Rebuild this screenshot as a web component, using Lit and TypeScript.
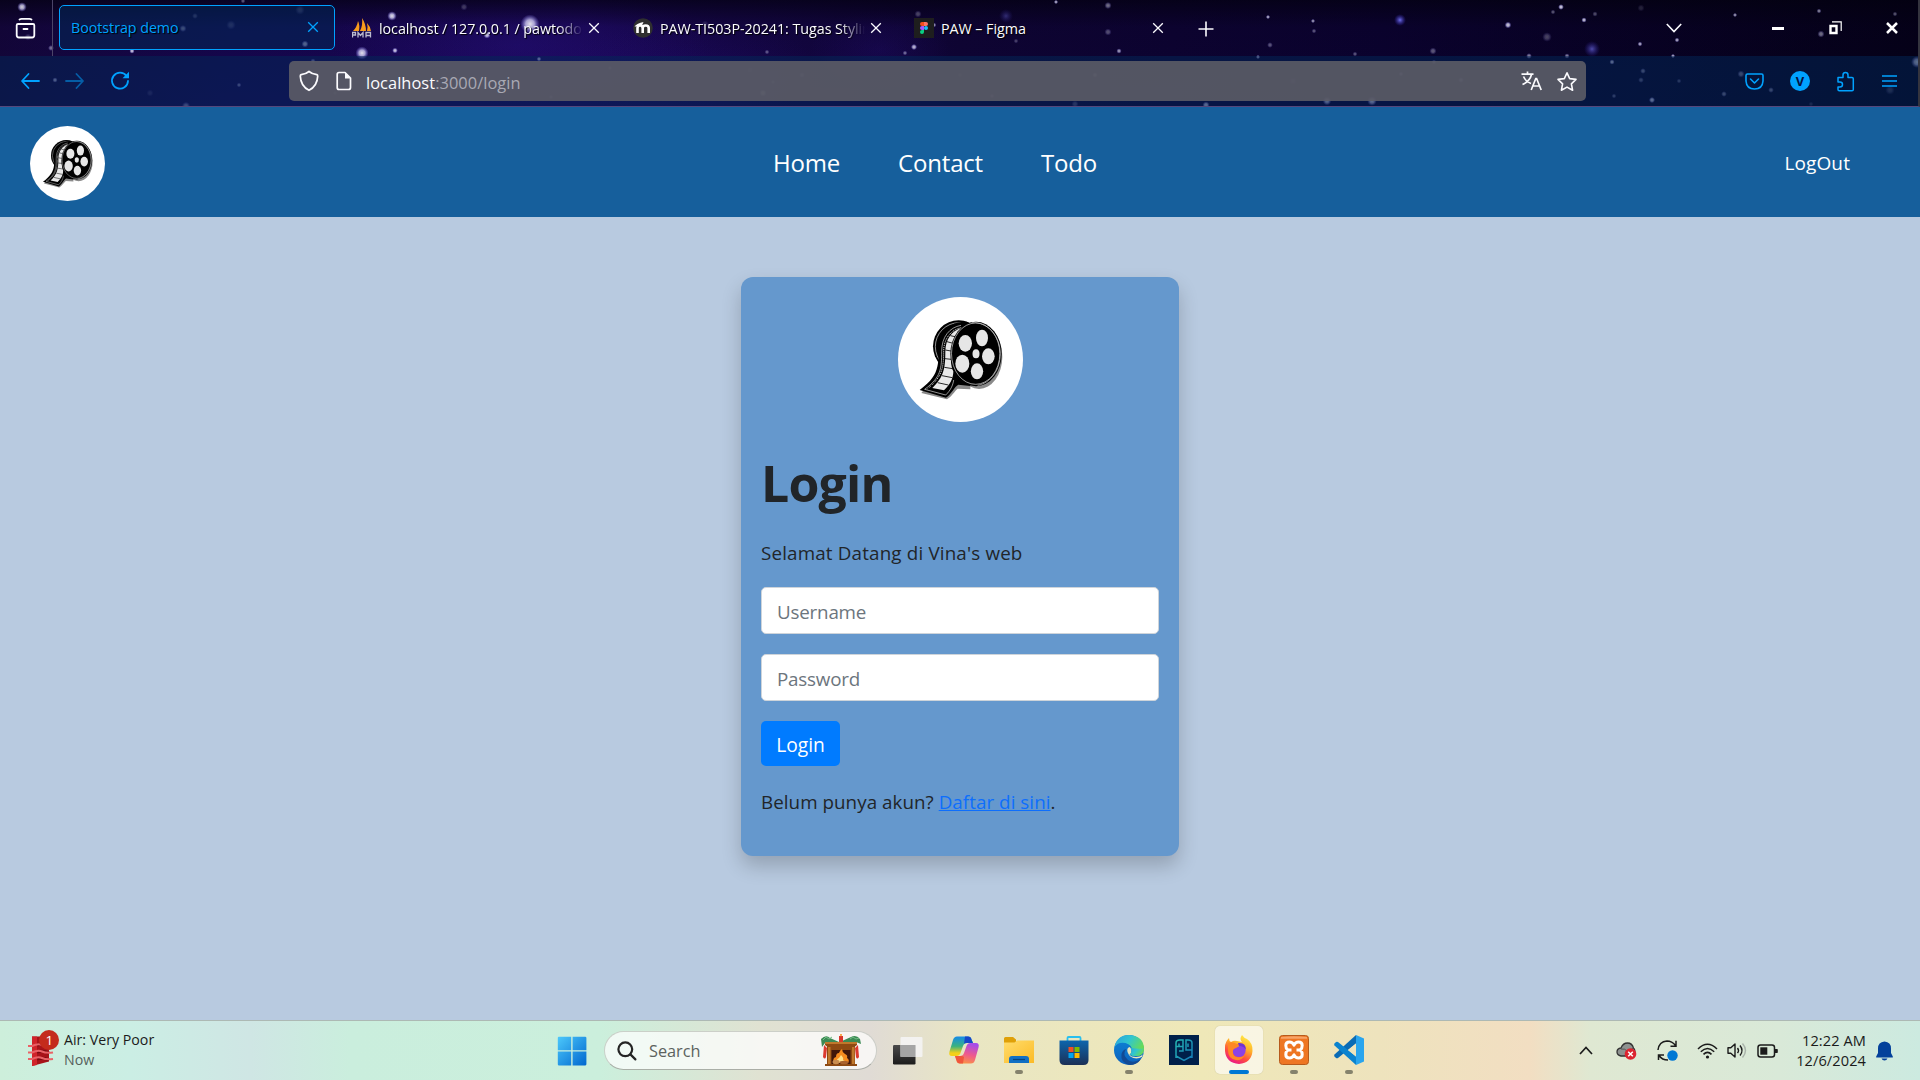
import { LitElement, html, svg, css } from "lit";
import { customElement } from "lit/decorators.js";

/* x, y, radius, opacity of each star in the browser theme */
const STARS: number[][] = [
  [22, 7, 4, 0.9], [51, 48, 2.5, 0.5], [132, 51, 2.2, 0.9], [183, 28.5, 3, 0.55], [195, 16, 2.5, 0.3],
  [231, 25, 4, 0.25], [305, 44, 3, 0.8], [300, 10, 4, 0.25], [362, 53, 5.5, 0.95], [395, 50.5, 2.4, 0.9], [392, 16, 4, 0.95],
  [530, 24, 8, 0.95], [487, 35, 3, 0.9], [313, 61, 2.2, 0.5], [55, 80, 2.2, 0.7], [239, 85, 2, 0.5],
  [539, 59, 2, 0.8], [186, 106, 3.5, 0.5], [335, 93, 2, 0.3], [610, 68, 2, 0.3], [551, 97, 2, 0.35],
  [28, 37, 3, 0.25], [243, 1, 2, 0.4], [150, 93, 3, 0.15], [464, 7, 3, 0.25],
  [914, 47, 2.6, 0.85], [905, 53, 2, 0.5], [934, 25, 2, 0.7], [1056, 2, 1.8, 0.8], [1108, 5.5, 3, 0.5],
  [1108, 32, 3, 0.35], [1119, 51, 2.2, 0.7], [1258, 57, 1.8, 0.7], [1016, 41, 2, 0.3], [918, 14, 3, 0.3],
  [763, 93, 3.2, 0.6], [802, 75, 2.4, 0.35], [773, 82, 2, 0.3], [1095, 75, 2.4, 0.5], [992, 96, 2, 0.4],
  [1206, 105, 3, 0.8], [1075, 104, 3, 0.3], [960, 75, 2, 0.2], [750, 70, 3, 0.15], [767, 52, 2, 0.4],
  [1268, 17, 1.8, 0.8], [1313, 21, 1.8, 0.7], [1314, 31, 2, 0.4], [1270, 45, 2.4, 0.4], [1355, 54, 2, 0.4],
  [1508, 25, 2.8, 0.9], [1561, 7, 2.4, 0.95], [1553, 12, 2, 0.4], [1584, 20, 2.2, 0.9], [1595, 14, 2.2, 0.35],
  [1547, 37, 4, 0.3], [1640, 44, 2, 0.8], [1677, 40, 2, 0.8], [1673, 56, 1.8, 0.8], [1735, 15, 1.8, 0.7],
  [1819, 11, 2, 0.6], [1821, 34, 3, 0.5], [1895, 14, 2, 0.4], [1641, 8, 3, 0.15], [1529, 56, 2.4, 0.6], [1567, 56, 2.2, 0.6],
  [1612, 62, 2.2, 0.8], [1643, 71, 2.4, 0.5], [1641, 80, 2.4, 0.4], [1652, 100, 2.6, 0.85], [1724, 94, 2.4, 0.5],
  [1741, 74, 3, 0.5], [1771, 90, 2.4, 0.5], [1679, 81, 2, 0.35], [1614, 96, 2, 0.4], [1917, 62, 5, 0.8],
  [1327, 101, 3.6, 0.75], [1372, 101, 4, 0.8], [1401, 74, 2, 0.5], [1461, 80, 2.4, 0.5], [1293, 81, 3, 0.2],
  [1433, 51, 3, 0.4], [1434, 62, 2, 0.5], [1890, 90, 4, 0.25], [1811, 104, 2, 0.2], [705, 24, 3, 0.15],
];

const stars = svg`<svg class="sky" width="1920" height="107" viewBox="0 0 1920 107" aria-hidden="true">
  <defs>
    <linearGradient id="sky" x1="0" y1="0" x2="1" y2="0">
      <stop offset="0" stop-color="#14063c"/><stop offset=".12" stop-color="#160650"/><stop offset=".3" stop-color="#1a0757"/>
      <stop offset=".38" stop-color="#150648"/><stop offset=".5" stop-color="#0f0436"/><stop offset=".72" stop-color="#0b0230"/>
      <stop offset="1" stop-color="#050119"/>
    </linearGradient>
    <linearGradient id="dim" x1="0" y1="0" x2="0" y2="1">
      <stop offset="0" stop-color="#03010f" stop-opacity=".7"/><stop offset=".25" stop-color="#03010f" stop-opacity=".12"/><stop offset="1" stop-color="#03010f" stop-opacity="0"/>
    </linearGradient>
    <radialGradient id="glow"><stop offset="0" stop-color="#2c1490" stop-opacity=".4"/><stop offset="1" stop-color="#2c1490" stop-opacity="0"/></radialGradient>
    <radialGradient id="star"><stop offset="0" stop-color="#fff"/><stop offset=".45" stop-color="#dcd8ff" stop-opacity=".85"/><stop offset="1" stop-color="#8c80ff" stop-opacity="0"/></radialGradient>
    <radialGradient id="blue"><stop offset="0" stop-color="#7c7cff"/><stop offset="1" stop-color="#3a2cc0" stop-opacity="0"/></radialGradient>
  </defs>
  <rect width="1920" height="107" fill="url(#sky)"/>
  <ellipse cx="520" cy="45" rx="190" ry="60" fill="url(#glow)"/>
  <ellipse cx="690" cy="70" rx="130" ry="50" fill="url(#glow)" opacity=".5"/>
  <ellipse cx="880" cy="50" rx="70" ry="40" fill="url(#glow)" opacity=".6"/>
  <rect width="1920" height="107" fill="url(#dim)"/>
  <circle cx="1400" cy="20" r="6" fill="url(#blue)" opacity=".9"/><circle cx="1592" cy="49" r="8" fill="url(#blue)" opacity=".6"/><circle cx="1006" cy="16" r="7" fill="url(#blue)" opacity=".35"/>
  ${STARS.map(([x, y, r, o]) => svg`<circle cx=${x} cy=${y} r=${r * 1.2} opacity=${o * 0.92} fill="url(#star)"/>`)}
</svg>`;

const closeIcon = html`<svg class="x" width="12" height="12" viewBox="0 0 12 12"><path d="M1.2 1.2l9.6 9.6M10.8 1.2l-9.6 9.6" stroke="currentColor" stroke-width="1.3" fill="none"/></svg>`;

const reel = (size: number) => html`<svg class="reel" width=${size} height=${size} viewBox="23 21 375 375">
  <circle cx="210.500" cy="208.500" r="187.500" fill="#fff"/>
  <g fill="#8a8a8a">
    <ellipse cx="266" cy="200" rx="70" ry="97"/>
    <path d="M93 309L170 328C186 318 192 304 202 296L240 298V270L140 250Z"/>
  </g>
  <ellipse cx="205" cy="169" rx="77" ry="78" fill="#000"/>
  <ellipse cx="206" cy="170" rx="71" ry="72" fill="none" stroke="#ddd" stroke-width="2"/>
  <path d="M232 96C190 92 154 118 147 160C140 212 158 250 88 300L167 323C184 312 192 290 204 284L240 288Z" fill="#000"/>
  <path d="M212 106C178 112 154 140 154 184C154 236 152 262 103 298L166 315C180 302 188 286 190 270" fill="none" stroke="#ddd" stroke-width="2"/>
  <path d="M213 113C186 118 160 142 160 184C160 240 152 262 112 296" fill="none" stroke="#eee" stroke-width="3" stroke-dasharray="3 3"/>
  <path d="M212 114C184 124 166 146 165 184C165 236 160 262 126 294L161 301C180 284 189 264 189 244C176 216 180 160 212 114Z" fill="#e9e9e9"/>
  <path d="M180 137L199 141M170 155L188 160M165 180L182 183M164 206L183 208M162 232L187 236M155 257L186 263M142 278L174 285" stroke="#000" stroke-width="2.500"/>
  <ellipse cx="257" cy="192" rx="77" ry="97" fill="#000"/>
  <ellipse cx="256" cy="191" rx="72.500" ry="92" fill="#000" stroke="#fff" stroke-width="1.800"/>
  <path d="M244 98C290 93 329 138 330 190C330 240 300 280 262 286" fill="none" stroke="#ccc" stroke-width="2"/>
  <g fill="#e6e6e6">
    <ellipse cx="225" cy="160" rx="20" ry="25"/><ellipse cx="275" cy="144" rx="18" ry="25"/>
    <ellipse cx="294" cy="199" rx="19" ry="24"/><ellipse cx="260" cy="244" rx="18.500" ry="24"/>
    <ellipse cx="216" cy="221" rx="21" ry="27"/><ellipse cx="257" cy="191" rx="10.500" ry="13.500"/>
  </g>
</svg>`;

@customElement("browser-chrome")
class BrowserChrome extends LitElement {
  static styles = css`
    :host { display: block; height: 107px; position: relative; color: #fbfbfe; font-family: "Open Sans", "Noto Sans", sans-serif; overflow: hidden; }
    .sky { position: absolute; inset: 0; }
    .content { position: relative; height: 107px; display: flex; flex-direction: column; box-sizing: border-box; border-bottom: 1px solid #54477c; border-right: 2px solid #34343e; }
    svg { display: block; flex: none; }
    .tabs { height: 56px; display: flex; align-items: center; box-sizing: border-box; }
    .recent { width: 53px; height: 56px; padding: 18px 0 0 15px; box-sizing: border-box; border-right: 1px solid #4b4468; flex: none; }
    .tab { height: 45px; display: flex; align-items: center; box-sizing: border-box; flex: none; font-size: 14.3px; letter-spacing: -0.05px; text-shadow: 1px 1px 1px #000; white-space: nowrap; }
    .tab .label { flex: 1; min-width: 0; padding-top: 1px; line-height: 22px; }
    .fade { -webkit-mask-image: linear-gradient(to left, transparent, #000 26px); }
    .active { margin-left: 6px; width: 276px; padding: 0 15px 0 11px; border: 1px solid #00a2ff; border-radius: 5px; background: rgba(2, 40, 88, 0.55); color: #00a2ff; margin-top: -2px; }
    .pma { margin-left: 17px; width: 248px; }
    .moodle { margin-left: 33px; width: 249px; }
    .figma { margin-left: 32px; width: 250px; }
    .tab .icon { margin-right: 7px; }
    .tab .x { margin: -1px 0 0 5px; }
    .plus { margin: 1px 0 0 34px; }
    .grow { flex: 1; }
    .winbtn { display: flex; align-items: center; margin-right: 20px; }
    .tools { flex: 1; display: flex; align-items: center; background: rgba(2, 40, 88, 0.5); color: #00a2ff; }
    .nav { width: 289px; display: flex; align-items: center; box-sizing: border-box; padding-left: 20px; gap: 25px; flex: none; }
    .forward { opacity: 0.5; }
    .url { width: 1297px; height: 40px; display: flex; align-items: center; box-sizing: border-box; padding: 0 8px 0 10px; background: rgba(92, 92, 102, 0.9); border-radius: 5px; color: #fbfbfe; font-size: 16.4px; letter-spacing: 0.05px; flex: none; }
    .address { padding: 3px 0 0 14px; flex: 1; line-height: 24px; }
    .dim { color: #a9a9b4; }
    .doc { margin-left: 17px; }
    .ext { flex: 1; display: flex; align-items: center; justify-content: flex-end; padding-right: 20px; gap: 26px; }
    .badge { width: 20px; height: 20px; border-radius: 50%; background: #00a2ff; color: #06123f; font: bold 13px/20px "Open Sans", sans-serif; text-align: center; }
  `;
  render() {
    return html`${stars}
    <div class="content">
      <div class="tabs">
        <div class="recent"><svg width="21" height="21" viewBox="0 0 21 21" fill="none" stroke="#fbfbfe" stroke-width="1.800"><path d="M4.500 1.500q1-.6 2-.6h8q1 0 2 .6M3 6h15q1.300 0 1.300 1.300v10q0 2.200-2.200 2.200H4Q1.700 19.500 1.700 17.300v-10Q1.700 6 3 6zM8.500 11h4" stroke-linecap="round"/></svg></div>
        <div class="tab active"><span class="label">Bootstrap demo</span>${closeIcon}</div>
        <div class="tab pma">
          <svg class="icon" width="20" height="21" viewBox="0 0 20 21"><path d="M1 13Q5 9 6 3q2 4 1 10zM8 13q3-6 2-13 4 6 4 13zM15 13q1-5 0-8 3 3 4 8z" fill="#f89c1c"/><path d="M.5 19.500v-5h3v2.500h-3M6 19.500v-5l2.500 3 2.500-3v5M14 19.500v-5h4.500v5M14 17.500h4" fill="none" stroke="#bcbcd0" stroke-width="1.300"/></svg>
          <span class="label fade">localhost / 127.0.0.1 / pawtodo</span>${closeIcon}
        </div>
        <div class="tab moodle">
          <svg class="icon" width="20" height="20" viewBox="0 0 20 20"><circle cx="10" cy="10" r="9.800" fill="#2f2f2f"/><path d="M4.500 15V10q0-2.500 2.500-2.500T9.700 10v5M9.700 10q0-2.500 3-2.500t3 2.500v5" fill="none" stroke="#fff" stroke-width="2.600"/><path d="M1.500 8.500Q4 5 10.500 4L9 7.500Q6 7.500 3 8.500z" fill="#fff"/></svg>
          <span class="label fade">PAW-TI503P-20241: Tugas Stylin</span>${closeIcon}
        </div>
        <div class="tab figma">
          <svg class="icon" width="20" height="20" viewBox="0 0 20 20"><rect width="20" height="20" fill="#1e1e1e"/><path d="M10 4H8a2 2 0 0 0 0 4h2z" fill="#f24e1e"/><path d="M10 4h2a2 2 0 0 1 0 4h-2z" fill="#ff7262"/><path d="M10 8H8a2 2 0 0 0 0 4h2z" fill="#a259ff"/><circle cx="12" cy="10" r="2" fill="#1abcfe"/><path d="M10 12H8a2 2 0 1 0 2 2z" fill="#0acf83"/></svg>
          <span class="label">PAW – Figma</span>${closeIcon}
        </div>
        <svg class="plus" width="16" height="16" viewBox="0 0 16 16"><path d="M8 .5v15M.5 8h15" stroke="#fbfbfe" stroke-width="1.600"/></svg>
        <div class="grow"></div>
        <div class="winbtn">
          <svg width="16" height="10" viewBox="0 0 16 10"><path d="M.8 1L8 8.500 15.200 1" fill="none" stroke="#fbfbfe" stroke-width="1.600"/></svg>
          <svg width="12" height="3" viewBox="0 0 12 3" style="margin-left:90px"><rect width="12" height="3" fill="#fff"/></svg>
          <svg width="13" height="14" viewBox="0 0 13 14" style="margin-left:45px"><path d="M1.500 5h6v7h-6z" fill="none" stroke="#fff" stroke-width="2.400"/><path d="M3 .8h9.200V10" fill="none" stroke="#fff" stroke-width="1.200"/></svg>
          <svg width="12" height="12" viewBox="0 0 12 12" style="margin-left:44px"><path d="M1 1l10 10M11 1L1 11" stroke="#fff" stroke-width="2.500"/></svg>
        </div>
      </div>
      <div class="tools">
        <div class="nav">
          <svg width="20" height="18" viewBox="0 0 20 18" fill="none" stroke="currentColor" stroke-width="1.800" stroke-linecap="round" stroke-linejoin="round"><path d="M8.500 2L2 9l6.500 7M2.300 9H19"/></svg>
          <svg class="forward" width="20" height="18" viewBox="0 0 20 18" fill="none" stroke="currentColor" stroke-width="1.800" stroke-linecap="round" stroke-linejoin="round"><path d="M11.500 2L18 9l-6.500 7M17.700 9H1"/></svg>
          <svg width="20" height="20" viewBox="0 0 20 20"><path d="M16.500 5A8 8 0 1 0 18 10" fill="none" stroke="currentColor" stroke-width="1.800" stroke-linecap="round"/><path d="M19 .8v6.500h-6.500z" fill="currentColor"/></svg>
        </div>
        <div class="url">
          <svg width="20" height="22" viewBox="0 0 20 22"><path d="M10 1.500Q13 4 17.800 4.600q.9.300.9 1.500Q18.300 16 10 20.300 1.700 16 1.300 6.100q0-1.200.9-1.500Q7 4 10 1.500z" fill="none" stroke="#fbfbfe" stroke-width="1.700" stroke-linejoin="round"/></svg>
          <svg class="doc" width="16" height="20" viewBox="0 0 16 20"><path d="M3 1.500h6l5.500 5.500v9.500q0 2-2 2H3q-1.800 0-1.800-2v-13Q1.200 1.500 3 1.500z" fill="none" stroke="#fbfbfe" stroke-width="1.700" stroke-linejoin="round"/><path d="M9 1v6.500h5.500z" fill="#fbfbfe"/></svg>
          <span class="address">localhost<span class="dim">:3000/login</span></span>
          <svg width="21" height="20" viewBox="0 0 21 20" fill="none" stroke="#fbfbfe" stroke-width="1.700"><path d="M.5 3.200h12M6.500.5v2.700M2.500 5.500Q5 11 10 12.500M10.500 3.500Q9 10 1.500 13.500M10.200 19l4.600-11.500h.8L20.200 19M11.800 15h6.800"/></svg>
          <svg style="margin-left:14px" width="22" height="21" viewBox="0 0 22 21"><path d="M11 1.800l2.700 5.800 6.300.8-4.600 4.400 1.200 6.400L11 16.100l-5.600 3.100 1.200-6.400L2 8.400l6.300-.8z" fill="none" stroke="#fbfbfe" stroke-width="1.600" stroke-linejoin="round"/></svg>
        </div>
        <div class="ext">
          <svg width="19" height="17" viewBox="0 0 19 17" fill="none" stroke="currentColor" stroke-width="1.600" stroke-linecap="round" stroke-linejoin="round"><path d="M2.500 1h14q1.500 0 1.500 1.500V8q-.5 8-8.500 8T1 8V2.500Q1 1 2.500 1zM5.500 6l4 4 4-4"/></svg>
          <div class="badge">V</div>
          <svg width="19" height="21" viewBox="0 0 19 21" fill="none" stroke="currentColor" stroke-width="1.500" stroke-linejoin="round"><path d="M2 6.500h5V4a2.500 2.500 0 0 1 5 0v2.500h4q1.300 0 1.300 1.300V18.500q0 1.300-1.300 1.300H3.300Q2 19.800 2 18.500V16h2a2.500 2.500 0 0 0 0-5H2z"/></svg>
          <svg width="17" height="14" viewBox="0 0 17 14"><path d="M1 2h15M1 7h15M1 12h15" stroke="currentColor" stroke-width="1.400"/></svg>
        </div>
      </div>
    </div>`;
  }
}

@customElement("login-page")
class LoginPage extends LitElement {
  static styles = css`
    :host { display: block; height: 913px; background: #b8cae0; font: 18.8px/30px "Open Sans", "Noto Sans", sans-serif; color: #212529; }
    svg { display: block; flex: none; }
    header { height: 110px; box-sizing: border-box; background: #165f9c; color: #fff; display: grid; grid-template-columns: 1fr auto 1fr; align-items: center; padding: 2px 70px 0 30px; }
    nav { display: flex; gap: 58px; font-size: 24px; letter-spacing: -0.2px; margin-left: -10px; }
    .out { justify-self: end; font-size: 19px; letter-spacing: 0.1px; }
    .card { width: 438px; height: 579px; box-sizing: border-box; margin: 60px auto 0; padding: 20px; border-radius: 12px; background: #6598cd; box-shadow: 0 10px 20px rgba(0, 0, 0, 0.2); display: flex; flex-direction: column; }
    .card .reel { align-self: center; }
    h1 { margin: 31px 0 25px; font-size: 50px; line-height: 60px; letter-spacing: -0.8px; font-weight: 700; }
    p { margin: 0 0 19px; letter-spacing: 0.05px; }
    .welcome { letter-spacing: 0.17px; }
    .field { height: 47px; box-sizing: border-box; margin-bottom: 20px; padding: 9px 15px 0; border: 1px solid #ced4da; border-radius: 5px; background: #fff; color: #6c757d; letter-spacing: -0.2px; }
    .btn { width: 79px; height: 45px; box-sizing: border-box; padding-top: 9px; border-radius: 5px; background: #007bff; color: #fff; text-align: center; margin-bottom: 21px; font-size: 19.2px; }
    a { color: #0d6efd; text-decoration: underline; }
  `;
  render() {
    return html`<header>
      ${reel(75)}
      <nav><span>Home</span><span>Contact</span><span>Todo</span></nav>
      <span class="out">LogOut</span>
    </header>
    <main><div class="card">
      ${reel(125)}
      <h1>Login</h1>
      <p class="welcome">Selamat Datang di Vina's web</p>
      <div class="field">Username</div>
      <div class="field">Password</div>
      <div class="btn">Login</div>
      <p>Belum punya akun? <a>Daftar di sini</a>.</p>
    </div></main>`;
  }
}

@customElement("task-bar")
class TaskBar extends LitElement {
  static styles = css`
    :host { display: block; height: 60px; font: 14.2px/20px "Open Sans", "Noto Sans", sans-serif; color: #1b1b1b; }
    svg { display: block; flex: none; }
    .bar { height: 60px; box-sizing: border-box; border-top: 1px solid #adb9b4; display: flex; align-items: center;
      background: linear-gradient(90deg, #cdefdb 0, #cbeee4 130px, #cfe6e4 250px, #caeedd 350px, #cbefdc 600px, #e0e2d2 760px, #e0dbd5 870px, #e9e6c3 970px, #efe8b8 1200px, #eee3bd 1380px, #f2dec2 1530px, #dfe8d2 1590px, #d9e9d8 1780px, #cceae0 1920px); }
    .weather { width: 557px; box-sizing: border-box; padding-left: 28px; display: flex; align-items: center; flex: none; }
    .words { margin: -2px 0 0 4px; }
    .now { color: #56615c; }
    .search { width: 273px; height: 39px; box-sizing: border-box; margin: 0 16px 0 17px; padding: 0 14px 0 12px; border-radius: 20px; background: rgba(255, 255, 255, 0.72); border: 1px solid rgba(170, 175, 165, 0.55); border-bottom-color: rgba(120, 125, 115, 0.6); display: flex; align-items: center; color: #5c625e; font-size: 16.3px; flex: none; }
    .search span { flex: 1; margin-left: 12px; }
    .apps { display: flex; gap: 7px; flex: none; }
    .app { width: 48px; height: 48px; display: grid; place-items: center; position: relative; margin-top: -1px; }
    .app.on { background: rgba(255, 255, 255, 0.6); border-radius: 5px; box-shadow: 0 0 1px rgba(0, 0, 0, 0.25); }
    .app i { position: absolute; left: 20px; bottom: 0; width: 8px; height: 4px; border-radius: 2px; background: #85826c; }
    .app.on i { left: 14px; width: 20px; background: #0078d4; }
    .tray { flex: 1; display: flex; align-items: center; justify-content: flex-end; padding-right: 27px; color: #1b1b1b; }
    .clock { text-align: right; margin: -2px 10px 0 10px; width: 78px; font-size: 14.6px; letter-spacing: 0.08px; white-space: nowrap; }
  `;
  app(icon: unknown, state = "") {
    return html`<div class="app ${state === "on" ? "on" : ""}">${icon}${state ? html`<i></i>` : ""}</div>`;
  }
  render() {
    return html`<div class="bar">
      <div class="weather">
        <svg width="32" height="38" viewBox="0 0 32 38" style="margin-top:-4px"><path d="M4 6.500h17v25L4 36z" fill="#a81319"/><path d="M4 6.500h5V35l-5 1z" fill="#d0242a"/><path d="M9 15q6-2 12 1M9 22q6-2 12 1M9 29q6-2 12 1" stroke="#7c0b12" stroke-width="3" fill="none"/><path d="M0 16h4q6-3 10-1t11 1M0 22.500h4q6-3 10-1t11 1M0 29h4q6-3 10-1t11 1" stroke="#ea6266" stroke-width="2" fill="none"/><circle cx="21" cy="10" r="10" fill="#c42b1c"/><text x="21.300" y="15" fill="#fff" font-size="13.500" font-family="Open Sans" text-anchor="middle">1</text></svg>
        <div class="words"><div>Air: Very Poor</div><div class="now">Now</div></div>
      </div>
      <svg width="30" height="30" viewBox="0 0 30 30"><defs><linearGradient id="w" x1="0" y1="0" x2="1" y2="1"><stop offset="0" stop-color="#4cc8fb"/><stop offset="1" stop-color="#0067cf"/></linearGradient></defs><path d="M1.500.8H14.200V14.200H.8V1.500zM15.600.8H28.500L29.400 1.600V14.200H15.600zM.8 15.600H14.200V29.400H1.500L.8 28.500zM15.600 15.600H29.400V28.500L28.500 29.400H15.600z" fill="url(#w)"/></svg>
      <div class="search">
        <svg width="20" height="20" viewBox="0 0 20 20" fill="none" stroke="#252525" stroke-width="2.200" stroke-linecap="round"><circle cx="8.300" cy="8.300" r="6.900"/><path d="M13.400 13.400l5 5"/></svg>
        <span>Search</span>
        <svg width="42" height="34" viewBox="0 0 42 34">
          <path d="M1 5q5-5 9-1l9 4 3-1 9-4q5-3 9 2l1 5-5-2-8 4H11L5 9l-3 4z" fill="#3b8a54"/><path d="M3 6l3-3 3 2 3-2M30 5l3-2 3 2 3-1" stroke="#72bd83" fill="none"/>
          <path d="M4 11l3 3-1 9q-1 3-3 0zM38 11l-3 3 1 9q1 3 3 0z" fill="#dc3a2f"/>
          <path d="M19 2h4v8h-4z" fill="#d8372c"/><path d="M21-1q2 2 0 3.500-2-1.500 0-3.500z" fill="#f9a03a"/>
          <path d="M5 8h32v3l-2 1.500V30h2v2H5v-2h2V12.500L5 11z" fill="#8e4a12"/><path d="M5 8h32v2H5zM8 13h2.500v17H8zM32 13h2.500v17H32z" fill="#c0782b"/>
          <path d="M11.500 16h19v14h-19z" fill="#40160a"/><path d="M14 29q-2-5 2-6 0-4 3-4 1-3 3-4 0 3 3 5 3 1 2 4 3 2 1 5z" fill="#f58b1f"/><path d="M17 29q-1-4 2-5l2-3q3 3 2 5 3 1 2 3z" fill="#ffe08a"/><ellipse cx="16" cy="28" rx="3.500" ry="2.200" fill="#c98d4f"/><ellipse cx="24" cy="28.500" rx="4.500" ry="1.800" fill="#a9632e"/>
        </svg>
      </div>
      <svg width="30" height="30" viewBox="0 0 30 30" style="margin-right:17px"><defs><linearGradient id="tv" x1="0" y1="0" x2="0" y2="1"><stop offset="0" stop-color="#4a4a4a"/><stop offset="1" stop-color="#1c1c1c"/></linearGradient></defs><rect x="0" y="9" width="22.500" height="19.500" rx="1.200" fill="url(#tv)"/><rect x="7.500" y="1" width="22" height="20" rx="1" fill="#f4f4f4" opacity=".9"/><path d="M7.500 9h15v12H7.500z" fill="#a5a5a5"/></svg>
      <div class="apps">
        ${this.app(html`<svg width="32" height="32" viewBox="0 0 32 32"><defs>
          <linearGradient id="c1" x1="0" y1="0" x2="0" y2="1"><stop offset="0" stop-color="#158bea"/><stop offset=".5" stop-color="#3bb27e"/><stop offset=".85" stop-color="#f5d017"/></linearGradient>
          <linearGradient id="c2" x1=".5" y1="0" x2=".2" y2="1"><stop offset="0" stop-color="#a74be8"/><stop offset=".5" stop-color="#ef5a8c"/><stop offset="1" stop-color="#fb9a3c"/></linearGradient></defs>
          <path d="M9 2.500h11q3 0 3.500 3L25 9h-6q-3 0-4 3l-2.500 7q-1 3-4 3H4Q.3 22 1.500 17.500L5 6q1-3.500 4-3.500z" fill="url(#c1)"/><path d="M17 2.500h3q3 0 3.500 3L25 9h-6q-3 0-3 1z" fill="#1746c8"/>
          <path d="M23 29.500H12q-3 0-3.500-3L7 22h5q3 0 4-3l2.500-7q1-3 4-3H28q3.700 0 2.500 4.500L27 26q-1 3.500-4 3.500z" fill="url(#c2)"/><path d="M15 29.500h-3q-3 0-3.500-3L7 22h6q2.500 0 3 1z" fill="#f0563c"/></svg>`)}
        ${this.app(html`<svg width="32" height="32" viewBox="0 0 32 32"><defs><linearGradient id="fo" x1="0" y1="0" x2="1" y2="1"><stop offset="0" stop-color="#ffdc6b"/><stop offset="1" stop-color="#fcbb26"/></linearGradient></defs><path d="M1 4.500Q1 3 2.500 3H10l3 2.500V9H1z" fill="#dfa008"/><path d="M1 8.500h10.500L14 6.500h17V29H1z" fill="url(#fo)"/><path d="M6 29v-4q0-3 3-3h14q3 0 3 3v4z" fill="#1270c4"/><path d="M10 25.500h12" stroke="#08447f" stroke-width="1.200"/></svg>`, "run")}
        ${this.app(html`<svg width="32" height="32" viewBox="0 0 32 32"><defs><linearGradient id="st" x1="0" y1="0" x2="0" y2="1"><stop offset="0" stop-color="#0d65ad"/><stop offset="1" stop-color="#1c3056"/></linearGradient></defs><path d="M9.500 8V4q0-1 1-1h11q1 0 1 1v4" fill="none" stroke="#29bfee" stroke-width="1.800"/><path d="M1.500 6.500h29V26q0 5-5 5h-19q-5 0-5-5z" fill="url(#st)"/><path d="M10.500 13h5v5h-5z" fill="#f25022"/><path d="M16.500 13h5v5h-5z" fill="#7fba00"/><path d="M10.500 19h5v5h-5z" fill="#00a4ef"/><path d="M16.500 19h5v5h-5z" fill="#ffb900"/></svg>`)}
        ${this.app(html`<svg width="32" height="32" viewBox="0 0 32 32"><defs><linearGradient id="e1" x1="0" y1="0" x2="1" y2=".5"><stop offset="0" stop-color="#2a9fdf"/><stop offset=".5" stop-color="#30c6cf"/><stop offset="1" stop-color="#69dc52"/></linearGradient><linearGradient id="e2" x1="0" y1="0" x2="0" y2="1"><stop offset="0" stop-color="#0c86d8"/><stop offset="1" stop-color="#0d61bd"/></linearGradient></defs>
          <circle cx="16" cy="16" r="15" fill="url(#e2)"/><path d="M1.500 13Q4 1 16 1q15 1 15 14 0 7-8 7-4.500 0-6-2 2-1.500 2-4 0-5-6.500-7Q5 7.500 1.500 13z" fill="url(#e1)"/><path d="M13 15q-4 6 2 11 5 4 13-1-4 6-11 6Q7 29 8.500 20q1-4 4.500-5z" fill="#124a94"/><path d="M16.500 13q-3 1-2 5 2 6 9 6.500 3-.2 5.500-1.700L31 16q0 7-8 7-5 0-6.500-2.500 2-1.500 2-4.500 0-2-2-3z" fill="#ebe6bd"/><path d="M17.500 14q14 2 13.500-1 0 9-8 9-4 0-6-1.500 1.500-1 1.500-3.500z" fill="url(#e1)"/></svg>`, "run")}
        ${this.app(html`<svg width="32" height="32" viewBox="0 0 32 32"><defs><linearGradient id="pg" x1="0" y1="0" x2="1" y2="1"><stop offset="0" stop-color="#25b8b2"/><stop offset="1" stop-color="#1478b8"/></linearGradient></defs><path d="M1 1h30v30H1z" fill="#00204a"/><path d="M8 24V9q0-3 4-3h3v11h-4M8 12.500h7M24 24V9q0-3-4-3h-2v10h6M20 9.500v3.500M11 9.500V13M8 18v4l8 4.500 8-4.500v-4" fill="none" stroke="url(#pg)" stroke-width="1.500"/></svg>`)}
        ${this.app(html`<svg width="32" height="32" viewBox="0 0 32 32"><defs><linearGradient id="ff" x1=".8" y1="0" x2=".3" y2="1"><stop offset="0" stop-color="#fff14a"/><stop offset=".4" stop-color="#ffb029"/><stop offset=".7" stop-color="#ff4f3d"/><stop offset="1" stop-color="#e9148c"/></linearGradient></defs><path d="M2 13Q2 8 6 4q0 3 2 4 3-2 6-1l5 1Q16 5 19 1q2 3 5 4 6 4 5.500 12-1 12-13.500 13Q3 29 2 17z" fill="url(#ff)"/><circle cx="16" cy="16.500" r="6.600" fill="#8c42e3"/><path d="M5 9q4-2 9 1 3 0 4 1-3 2-5 3-4 1-3 5 0 3 4 4 5 1 8-2-3 6-9 5Q5 25 5 16z" fill="#ff8824"/><path d="M15 9q8-1 8 7-2-4-7-4z" fill="#7034d0"/></svg>`, "on")}
        ${this.app(html`<svg width="32" height="32" viewBox="0 0 32 32"><rect x="1.500" y="1.500" width="29" height="29" rx="3" fill="#ee7623" stroke="#b65a1c"/><path d="M3 3q13-1.500 26 0v1.800H3z" fill="#f7a468"/><path d="M7.800 11.500q0-3.500 3.700-3.500 3 0 4.500 3.200Q17.500 8 20.500 8q3.700 0 3.700 3.500 0 2.700-1.900 4.500 1.900 1.800 1.900 4.500 0 3.500-3.700 3.500-3 0-4.500-3.200-1.500 3.200-4.500 3.200-3.700 0-3.700-3.500 0-2.700 1.900-4.500-1.900-1.800-1.900-4.500z" fill="none" stroke="#fff" stroke-width="3" stroke-linejoin="round"/><path d="M10 16h3.500M18.500 16H22" stroke="#fff" stroke-width="3"/></svg>`, "run")}
        ${this.app(html`<svg width="32" height="32" viewBox="0 0 32 32"><path d="M23 1L31 4.500v23L23 31z" fill="#2aa5ee"/><path d="M23 1v8.500L5 24q-1 .7-2 0l-1.500-1.500q-.8-1 0-2z" fill="#0a6bb5"/><path d="M23 31v-8.500L5 8q-1-.7-2 0L1.500 9.500q-.8 1 0 2z" fill="#0b83cf"/><path d="M23 9.500v13L15 16z" fill="#eee4bd"/></svg>`, "run")}
      </div>
      <div class="tray">
        <svg width="14" height="9" viewBox="0 0 14 9"><path d="M1 8l6-6.500L13 8" fill="none" stroke="currentColor" stroke-width="1.700"/></svg>
        <svg style="margin-left:23px" width="21" height="18" viewBox="0 0 21 18"><path d="M5 14q-4-1-4-4 0-3.500 4-4Q7 1 11.500 1t6 5Q20 8 18 14z" fill="#8e9290" stroke="#333" stroke-width="1.300"/><path d="M5 7q4-1 7 3l5-4" stroke="#555" fill="none"/><circle cx="14.500" cy="12" r="5.800" fill="#dc2430"/><path d="M12.200 9.700l4.600 4.600M16.800 9.700l-4.600 4.600" stroke="#fff" stroke-width="1.500"/></svg>
        <svg style="margin-left:20px" width="21" height="21" viewBox="0 0 21 21" fill="none" stroke="#1b1b1b" stroke-width="1.500"><path d="M1 10q1-8.500 9-9 5 0 8.500 4.500M19 .8v5.500h-5.500M1.500 20v-5H7M2 15.500Q5 20 11 20"/><circle cx="15.500" cy="15.500" r="5.200" fill="#0078d4" stroke="none"/></svg>
        <svg style="margin-left:19px" width="21" height="16" viewBox="0 0 21 16" fill="none" stroke="currentColor" stroke-width="1.500"><path d="M1 6Q10.500-3.500 20 6M3.800 8.700q6.700-6.500 13.400 0M6.500 11.400q4-4 8 0"/><circle cx="10.500" cy="14" r="1.600" fill="currentColor" stroke="none"/></svg>
        <svg style="margin-left:9px" width="20" height="17" viewBox="0 0 20 17" fill="none" stroke="currentColor" stroke-width="1.400" stroke-linejoin="round"><path d="M1 5.800h2.800L8 2v13l-4.200-3.700H1zM10.500 6q2 2.500 0 5M13 3.500q4 5 0 10"/><path d="M15.500 1.500q6 7 0 14" stroke="#a9b3aa"/></svg>
        <svg style="margin-left:10px" width="21" height="14" viewBox="0 0 21 14"><rect x="1" y="1" width="16.500" height="12" rx="2.500" fill="none" stroke="currentColor" stroke-width="1.500"/><rect x="3.300" y="3.300" width="7" height="7.400" fill="currentColor"/><path d="M18 5h2q.8 0 .8.800v2.400q0 .8-.8.800h-2z" fill="currentColor"/></svg>
        <div class="clock">12:22 AM<br>12/6/2024</div>
        <svg width="17" height="20" viewBox="0 0 17 20"><path d="M8.500.5q6.500.5 6.500 7V12l1.800 3.500q.3 1-.6 1H.8q-.9 0-.6-1L2 12V7.500Q2 1 8.500.5zM5.500 17.500h6q-.8 2-3 2t-3-2z" fill="#04419b"/></svg>
      </div>
    </div>`;
  }
}

@customElement("app-root")
class AppRoot extends LitElement {
  static styles = css`
    :host { display: flex; flex-direction: column; width: 1920px; height: 1080px; overflow: hidden; }
  `;
  render() {
    return html`<browser-chrome></browser-chrome><login-page></login-page><task-bar></task-bar>`;
  }
}
